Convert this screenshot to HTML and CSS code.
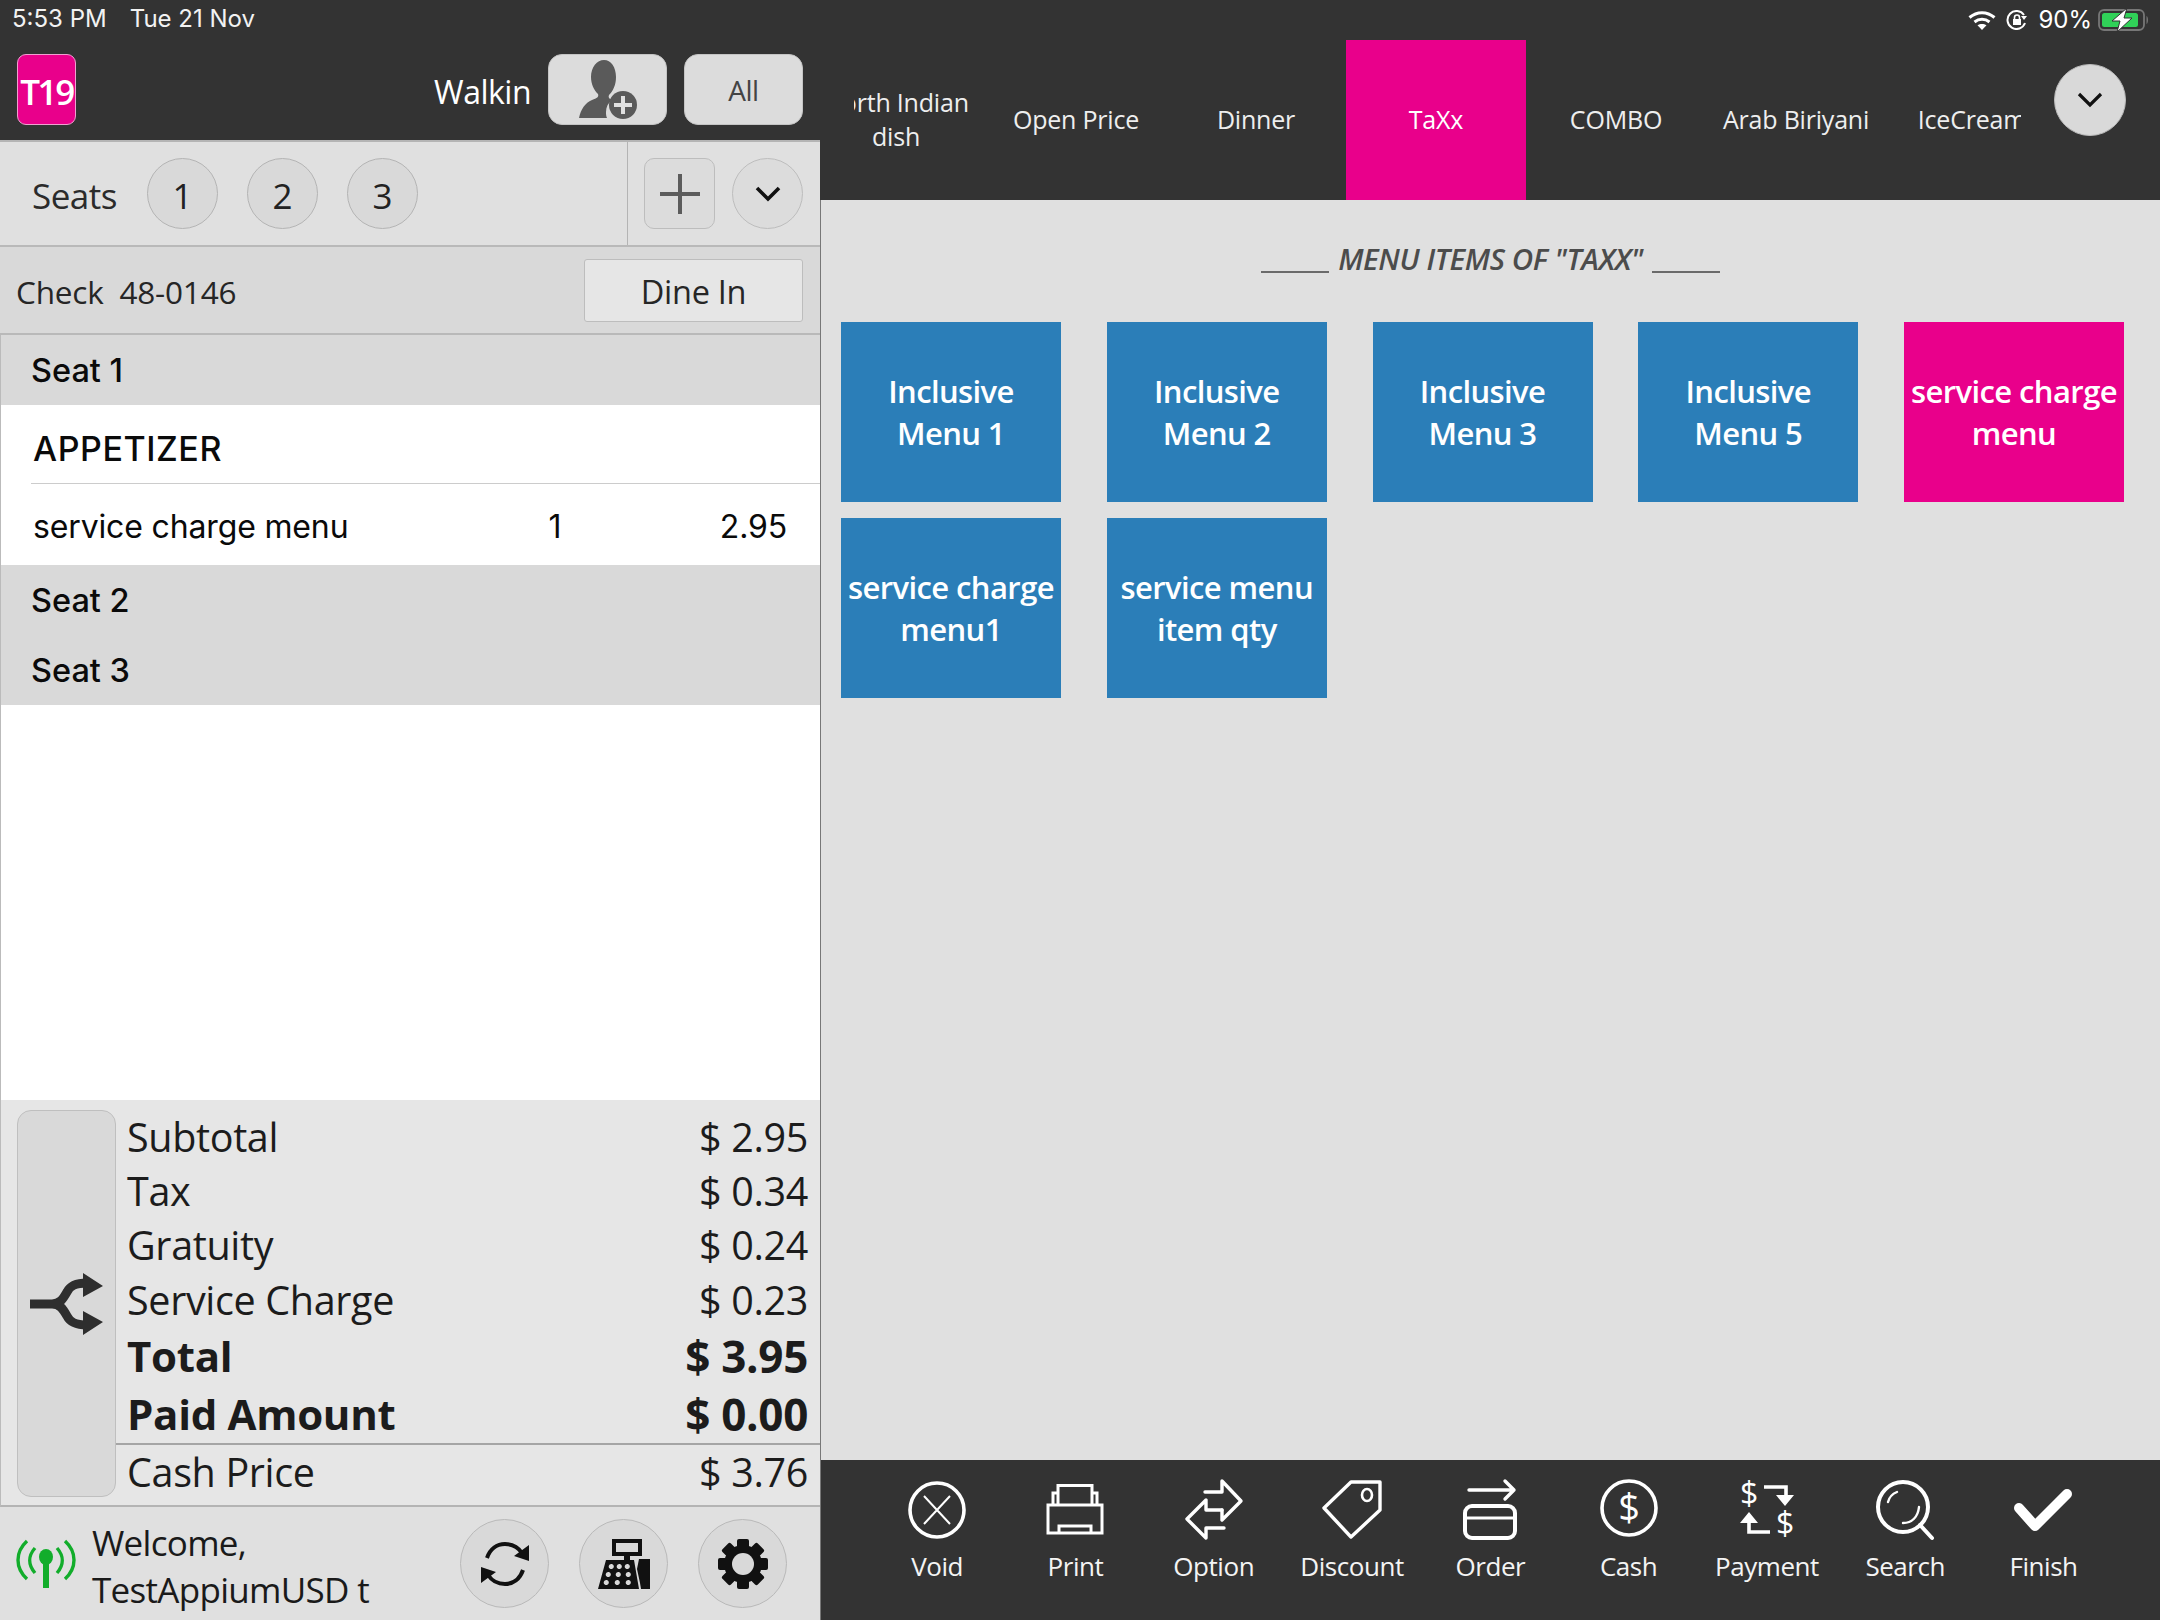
FILE: index.html
```html
<!DOCTYPE html>
<html lang="en">
<head>
<meta charset="utf-8">
<title>POS Order</title>
<link rel="stylesheet" href="styles.css">
</head>
<body>
<div class="app">
  <section class="left">
    <header class="left-top">
      <div class="status-left"><span>5:53 PM</span><span>Tue 21 Nov</span></div>
      <div class="head-row">
        <div class="table-badge">T19</div>
        <div class="walkin">Walkin</div>
        <button class="head-btn">
          <svg width="58" height="60" viewBox="0 0 58 60"><path fill="#5a5a5a" d="M25 0c7 0 12 7 12 17 0 8-3 14-7 18-1 2 0 4 3 5-4 3-6 7-6 12 0 2 0 4 1 6H0c2-9 6-15 13-18 5-2 7-3 6-6-4-4-7-10-7-17C12 7 18 0 25 0z"/><circle cx="44" cy="45" r="14" fill="#5a5a5a"/><path fill="none" stroke="#e0e0e0" stroke-width="4" d="M44 36v18M35 45h18"/></svg>
        </button>
        <button class="head-btn all-btn">All</button>
      </div>
    </header>
    <div class="seats-row">
      <div class="seats-main">
        <span class="seats-label">Seats</span>
        <span class="seat-circle">1</span>
        <span class="seat-circle">2</span>
        <span class="seat-circle">3</span>
      </div>
      <div class="seats-actions">
        <button class="plus-btn"><svg width="42" height="42" viewBox="0 0 42 42"><path fill="none" stroke="#5c5c5c" stroke-width="4" d="M21 1v40M1 21h40"/></svg></button>
        <button class="round-btn"><svg width="26" height="16" viewBox="0 0 26 16"><path fill="none" stroke="#111" stroke-width="3.6" d="M2 2l11 11L24 2"/></svg></button>
      </div>
    </div>
    <div class="check-row">
      <span class="check-text">Check&nbsp; 48-0146</span>
      <button class="dine-btn">Dine In</button>
    </div>
    <div class="order-list">
      <div class="seat-row">Seat 1</div>
      <div class="group-row"><span>APPETIZER</span></div>
      <div class="item-row"><span class="item-name">service charge menu</span><span class="item-qty">1</span><span class="item-price">2.95</span></div>
      <div class="seat-row">Seat 2</div>
      <div class="seat-row">Seat 3</div>
    </div>
    <div class="summary">
      <button class="split-btn">
        <svg width="74" height="62" viewBox="0 0 74 62"><path fill="none" stroke="#2e2e2e" stroke-width="9" d="M0 31h22c8 0 11-5 15-12 3-6 8-9 20-9M22 31c8 0 11 5 15 12 3 6 8 9 20 9"/><path fill="#2e2e2e" d="M53 0l20 13-20 11zM53 38l20 11-20 13z"/></svg>
      </button>
      <div class="totals">
        <div class="t-row"><span>Subtotal</span><span>$ 2.95</span></div>
        <div class="t-row"><span>Tax</span><span>$ 0.34</span></div>
        <div class="t-row"><span>Gratuity</span><span>$ 0.24</span></div>
        <div class="t-row"><span>Service Charge</span><span>$ 0.23</span></div>
        <div class="t-row t-bold"><span>Total</span><span class="t-val">$ 3.95</span></div>
        <div class="t-row t-bold"><span>Paid Amount</span><span class="t-val">$ 0.00</span></div>
        <div class="t-row t-cash"><span>Cash Price</span><span>$ 3.76</span></div>
      </div>
    </div>
    <footer class="left-foot">
      <svg class="antenna" width="60" height="50" viewBox="0 0 60 50"><g fill="none" stroke="#12ad2b" stroke-width="3.4"><path d="M11 3C-1 14-1 30 11 41M49 3c12 11 12 27 0 38"/><path d="M19 10c-7 8-7 17 0 25M41 10c7 8 7 17 0 25"/></g><ellipse cx="30" cy="19" rx="7" ry="8" fill="#12ad2b"/><path fill="#12ad2b" d="M27 22h6v28h-6z"/></svg>
      <div class="welcome">Welcome,<br>TestAppiumUSD t</div>
      <div class="foot-btns">
        <button class="foot-btn"><svg width="52" height="46" viewBox="0 0 52 46"><g fill="none" stroke="#111" stroke-width="4"><path d="M8 17C11 8 18 3 26 3c7 0 13 3 17 9"/><path d="M44 29c-3 9-10 14-18 14-7 0-13-3-17-9"/></g><path fill="#111" d="M50 4v16l-15-5zM2 42V26l15 5z"/></svg></button>
        <button class="foot-btn"><svg width="52" height="50" viewBox="0 0 52 50"><g fill="#111"><path d="M14 0h30v17H32v4h-6v-4H14zM18 4v9h22V4z" fill-rule="evenodd"/><path fill-rule="evenodd" d="M8 21h28l5 29H0zM14 25a2.600 2.600 0 100 5 2.600 2.600 0 000-5zm8 0a2.600 2.600 0 100 5 2.600 2.600 0 000-5zm8 0a2.600 2.600 0 100 5 2.600 2.600 0 000-5zM11 33a2.600 2.600 0 100 5 2.600 2.600 0 000-5zm10 0a2.600 2.600 0 100 5 2.600 2.600 0 000-5zm10 0a2.600 2.600 0 100 5 2.600 2.600 0 000-5zM9 41a2.600 2.600 0 100 5 2.600 2.600 0 000-5zm11 0a2.600 2.600 0 100 5 2.600 2.600 0 000-5zm11 0a2.600 2.600 0 100 5 2.600 2.600 0 000-5z"/><path d="M41 20h11v30h-9l-1-6-3-14z"/></g></svg></button>
        <button class="foot-btn"><svg width="52" height="50" viewBox="0 0 52 50"><g fill="#111"><circle cx="26" cy="25" r="19"/><rect x="20" y="0" width="12" height="50" rx="2"/><rect x="20" y="0" width="12" height="50" rx="2" transform="rotate(45 26 25)"/><rect x="20" y="0" width="12" height="50" rx="2" transform="rotate(90 26 25)"/><rect x="20" y="0" width="12" height="50" rx="2" transform="rotate(135 26 25)"/></g><circle cx="26" cy="25" r="11" fill="#d9d9d9"/></svg></button>
      </div>
    </footer>
  </section>

  <section class="right">
    <header class="right-top">
      <div class="status-right">
        <svg width="28" height="20" viewBox="0 0 28 20"><g fill="none" stroke="#fff" stroke-width="3"><path d="M1.500 7.500C9 1 19 1 26.500 7.500"/><path d="M6.500 12c4.500-3.600 10.500-3.600 15 0"/></g><path fill="#fff" d="M14 20l-4.500-4.700c2.700-1.900 6.300-1.900 9 0z"/></svg>
        <svg width="22" height="20" viewBox="0 0 22 20"><path fill="none" stroke="#fff" stroke-width="2" d="M19 13a9 9 0 11-1-8"/><path fill="#fff" d="M15 6h6l-3 4zM7 9h8v6H7z"/><path fill="none" stroke="#fff" stroke-width="1.600" d="M8.500 9V7.500a2.500 2.500 0 015 0V9"/></svg>
        <span>90%</span>
        <svg class="battery" width="52" height="24" viewBox="0 0 52 24"><rect x="1" y="2" width="45" height="20" rx="5" fill="none" stroke="#777" stroke-width="1.800"/><rect x="4" y="5" width="36" height="14" rx="2.500" fill="#30d158"/><path fill="#777" d="M48.500 8c2 1 2 7 0 8z"/><path fill="#fff" stroke="#333" stroke-width="1" d="M29 0L14 13h8l-3 11 15-14h-8z"/></svg>
      </div>
      <div class="tabs-row">
        <nav class="tabs">
          <div class="tabs-inner">
            <div class="tab">North Indian dish</div>
            <div class="tab">Open Price</div>
            <div class="tab">Dinner</div>
            <div class="tab tab-active">TaXx</div>
            <div class="tab">COMBO</div>
            <div class="tab">Arab Biriyani</div>
            <div class="tab tab-last">IceCream</div>
          </div>
        </nav>
        <button class="tabs-more"><svg width="26" height="16" viewBox="0 0 26 16"><path fill="none" stroke="#111" stroke-width="3.200" d="M2 2l11 11L24 2"/></svg></button>
      </div>
    </header>
    <main class="menu">
      <h2 class="menu-title"><i class="rule"></i><span>MENU ITEMS OF "TAXX"</span><i class="rule"></i></h2>
      <div class="tiles">
        <div class="tile">Inclusive Menu 1</div>
        <div class="tile">Inclusive Menu 2</div>
        <div class="tile">Inclusive Menu 3</div>
        <div class="tile">Inclusive Menu 5</div>
        <div class="tile tile-pink">service charge menu</div>
        <div class="tile">service charge menu1</div>
        <div class="tile">service menu item qty</div>
      </div>
    </main>
    <footer class="actions">
      <div class="action"><svg width="64" height="64" viewBox="0 0 64 64"><circle cx="32" cy="33" r="27" fill="none" stroke="#fff" stroke-width="3.600"/><path fill="none" stroke="#fff" stroke-width="2" d="M19 19l26 28M45 19L19 47"/></svg><span>Void</span></div>
      <div class="action"><svg width="64" height="64" viewBox="0 0 64 64"><g fill="none" stroke="#fff" stroke-width="3"><path d="M15 28V8.500h34V28"/><path d="M15 16h-5v12M49 16h5v12"/><path d="M5 28h54v28H5z"/><path d="M16 56v-7h32v7"/></g></svg><span>Print</span></div>
      <div class="action"><svg width="64" height="64" viewBox="0 0 64 64"><g fill="none" stroke="#fff" stroke-width="3.400" stroke-linejoin="round" stroke-linecap="round"><path d="M23 15h17V4l19 20-19 19V33"/><path d="M42 51H24v10L5 42l19-19v10h16"/></g></svg><span>Option</span></div>
      <div class="action"><svg width="64" height="64" viewBox="0 0 64 64"><path fill="none" stroke="#fff" stroke-width="3.400" stroke-linejoin="round" d="M31 5h29v28L31 60 4 31z"/><ellipse cx="47" cy="18" rx="5" ry="6" fill="none" stroke="#fff" stroke-width="2.600"/></svg><span>Discount</span></div>
      <div class="action"><svg width="64" height="64" viewBox="0 0 64 64"><g fill="none" stroke="#fff" stroke-width="3.400" stroke-linecap="round" stroke-linejoin="round"><path d="M11 13h45M47 4l9 9-9 9"/><rect x="7" y="29" width="50" height="32" rx="7" stroke-width="4"/><path d="M7 41h50" stroke-width="3"/></g></svg><span>Order</span></div>
      <div class="action"><svg width="64" height="64" viewBox="0 0 64 64"><circle cx="32" cy="31" r="27" fill="none" stroke="#fff" stroke-width="3.600"/><text class="icon-dollar" x="32" y="44" text-anchor="middle">$</text></svg><span>Cash</span></div>
      <div class="action"><svg width="64" height="64" viewBox="0 0 64 64"><text class="icon-dollar-sm" x="14" y="28" text-anchor="middle">$</text><text class="icon-dollar-sm" x="50" y="58" text-anchor="middle">$</text><g fill="none" stroke="#fff" stroke-width="3.600"><path d="M29 10h22v12"/><path d="M35 55H14V42"/></g><path fill="#fff" d="M41 18h18l-9 11zM5 46l9-11 9 11z"/></svg><span>Payment</span></div>
      <div class="action"><svg width="64" height="64" viewBox="0 0 64 64"><circle cx="30" cy="30" r="25" fill="none" stroke="#fff" stroke-width="4"/><g fill="none" stroke="#fff" stroke-linecap="round"><path stroke-width="4" d="M47 48l12 13"/><path stroke-width="2.400" d="M15 25c1-4 4-8 9-10M30 46c9 0 15-6 16-16"/></g></svg><span>Search</span></div>
      <div class="action"><svg width="64" height="64" viewBox="0 0 64 64"><path fill="none" stroke="#fff" stroke-width="10" stroke-linecap="round" stroke-linejoin="round" d="M7 31l16 18 32-32"/></svg><span>Finish</span></div>
    </footer>
  </section>
</div>
</body>
</html>
```
FILE: styles.css
```css
* { box-sizing: border-box; }
html, body { margin: 0; padding: 0; }
body { width: 2160px; height: 1620px; overflow: hidden; font-family: "Open Sans", "Noto Sans", sans-serif; color: #1c1c1c; background: #e0e0e0; }
button { font: inherit; color: inherit; padding: 0; margin: 0; display: flex; align-items: center; justify-content: center; }
.app { display: flex; width: 2160px; height: 1620px; }

.left { width: 820px; height: 1620px; display: flex; flex-direction: column; flex: none; }
.left-top { height: 142px; background: #333; border-bottom: 2px solid #b4b4b4; color: #fff; }
.status-left { height: 39px; padding: 5px 0 0 12px; display: flex; gap: 23px; font: 24px/28px Inter, "Liberation Sans", sans-serif; color: #f2f2f2; }
.head-row { display: flex; align-items: center; height: 71px; margin-top: 15px; padding: 0 17px; }
.table-badge { width: 59px; height: 71px; background: #e9008b; border: 1px solid #f0a0d0; border-radius: 9px; display: flex; align-items: center; justify-content: center; padding-top: 3px; font-size: 35px; letter-spacing: -2.500px; font-weight: 600; }
.walkin { margin-left: auto; margin-right: 17px; padding-top: 3px; font-size: 32px; font-weight: 500; letter-spacing: -.5px; }
.head-btn { width: 119px; height: 71px; background: #dcdcdc; border: 1px solid #c4c4c4; border-radius: 14px; color: #444; }
.all-btn { margin-left: 17px; font-size: 28px; letter-spacing: -.5px; }

.seats-row { height: 105px; display: flex; background: #e0e0e0; border-bottom: 2px solid #b9b9b9; }
.seats-main { width: 627px; display: flex; align-items: center; padding-left: 32px; }
.seats-label { font-size: 35px; width: 115px; color: #2b2b2b; font-weight: 500; letter-spacing: -.5px; padding-top: 4px; }
.seat-circle { width: 71px; height: 71px; border-radius: 50%; margin-right: 29px; background: #d9d9d9; border: 1px solid #b4b4b4; display: flex; align-items: center; justify-content: center; padding-top: 4px; font-size: 35px; color: #222; }
.seats-actions { flex: 1; display: flex; align-items: center; gap: 17px; padding: 0 0 0 16px; border-left: 1px solid #b4b4b4; }
.plus-btn { width: 71px; height: 71px; background: #dcdcdc; border: 1px solid #bdbdbd; border-radius: 10px; }
.round-btn { width: 71px; height: 71px; background: #dcdcdc; border: 1px solid #bdbdbd; border-radius: 50%; }

.check-row { height: 88px; display: flex; align-items: center; justify-content: space-between; padding: 0 17px 0 16px; background: #d9d9d9; border-bottom: 2px solid #b9b9b9; }
.check-text { font-size: 31.500px; letter-spacing: -.2px; color: #262626; font-weight: 500; padding-top: 2px; }
.dine-btn { width: 219px; height: 63px; background: #e6e6e6; border: 1px solid #bdbdbd; border-radius: 3px; padding-top: 2px; font-size: 32.500px; font-weight: 500; letter-spacing: -.3px; color: #262626; }

.order-list { flex: 1; background: #fff; border-left: 1px solid #bbb; font-family: Inter, "Liberation Sans", sans-serif; color: #0a0a0a; }
.seat-row { height: 70px; background: #d9d9d9; padding-left: 30px; display: flex; align-items: center; font-size: 32.500px; font-weight: 500; }
.group-row { height: 79px; margin-left: 30px; padding: 8px 0 0 2px; display: flex; align-items: center; border-bottom: 1px solid #ccc; font-size: 34px; font-weight: 500; letter-spacing: .55px; }
.item-row { height: 81px; display: flex; align-items: center; padding: 4px 33px 0 32px; font-size: 32px; letter-spacing: -.15px; }
.item-name { width: 512px; }
.item-qty { width: 20px; text-align: center; }
.item-price { margin-left: auto; }

.summary { height: 407px; background: #e6e6e6; display: flex; padding: 10px 0 10px 16px; border-left: 1px solid #bbb; border-bottom: 2px solid #b4b4b4; }
.split-btn { width: 99px; height: 387px; background: #d9d9d9; border: 1px solid #bfbfbf; border-radius: 14px; flex: none; }
.totals { flex: 1; }
.t-row { height: 54.200px; display: flex; align-items: center; justify-content: space-between; padding: 0 12px 0 11px; font-size: 39.500px; font-weight: 500; letter-spacing: -.35px; color: #1c1c1c; white-space: nowrap; }
.t-bold { height: 58px; font-size: 42px; font-weight: 700; letter-spacing: -.3px; }
.t-val { font-size: 44px; }
.t-cash { height: 56px; border-top: 2px solid #a5a5a5; }

.left-foot { height: 113px; background: #e0e0e0; display: flex; align-items: center; padding-left: 16px; }
.antenna { flex: none; margin-top: -1px; }
.welcome { margin-left: 16px; padding-top: 5px; font-size: 35px; line-height: 47px; letter-spacing: -.7px; color: #1a1a1a; white-space: nowrap; }
.foot-btns { margin-left: auto; display: flex; gap: 30px; padding-right: 33px; }
.foot-btn { width: 89px; height: 89px; border-radius: 50%; background: #d9d9d9; border: 1px solid #b9b9b9; }

.right { flex: 1; display: flex; flex-direction: column; min-width: 0; }
.right-top { height: 200px; background: #333; color: #f2f2f2; }
.status-right { height: 40px; display: flex; align-items: center; justify-content: flex-end; gap: 10px; padding-right: 10px; font: 24px/28px Inter, "Liberation Sans", sans-serif; color: #fff; }
.battery { margin-left: -4px; }
.tabs-row { display: flex; height: 160px; padding-left: 34px; }
.tabs { width: 1167px; height: 160px; overflow: hidden; flex: none; }
.tabs-inner { display: flex; height: 160px; margin-left: -48px; }
.tab { width: 180px; flex: none; height: 160px; padding: 0 10px 2px; display: flex; align-items: center; justify-content: center; text-align: center; font-size: 25px; line-height: 34px; letter-spacing: -.2px; color: #eee; }
.tab-active { background: #e9008b; color: #fff; }
.tab-last { padding-right: 18px; }
.tabs-more { width: 72px; height: 72px; margin: 24px 0 0 33px; border-radius: 50%; background: #d9d9d9; border: 1px solid #bbb; flex: none; }

.menu { flex: 1; background: #e0e0e0; border-left: 1px solid #777; padding-left: 20px; }
.menu-title { height: 122px; margin: 0 0 0 -20px; display: flex; align-items: center; justify-content: center; gap: 9px; font-size: 29.500px; line-height: 36px; font-weight: 600; font-style: italic; letter-spacing: -.4px; color: #4c4c4c; padding-bottom: 4px; }
.rule { width: 68px; height: 2px; background: #6a6a6a; margin-top: 26px; }
.tiles { display: grid; grid-template-columns: repeat(5, 220px); grid-auto-rows: 180px; column-gap: 45.750px; row-gap: 16px; }
.tile { background: #2b7eb8; color: #fff; display: flex; align-items: center; justify-content: center; text-align: center; font-size: 31px; line-height: 42px; font-weight: 600; letter-spacing: -.6px; padding: 0 4px; }
.tile-pink { background: #e9008b; }

.actions { height: 160px; background: #333; border-left: 1px solid #777; padding-left: 47px; display: flex; color: #f4f4f4; }
.action { width: 138.300px; flex: none; display: flex; flex-direction: column; align-items: center; padding-top: 17px; font-size: 26px; letter-spacing: -.45px; line-height: 36px; }
.action svg { display: block; margin-bottom: 7px; }
.icon-dollar { font: 38px "Open Sans", sans-serif; fill: #fff; }
.icon-dollar-sm { font: 32px "Open Sans", sans-serif; fill: #fff; }
```
